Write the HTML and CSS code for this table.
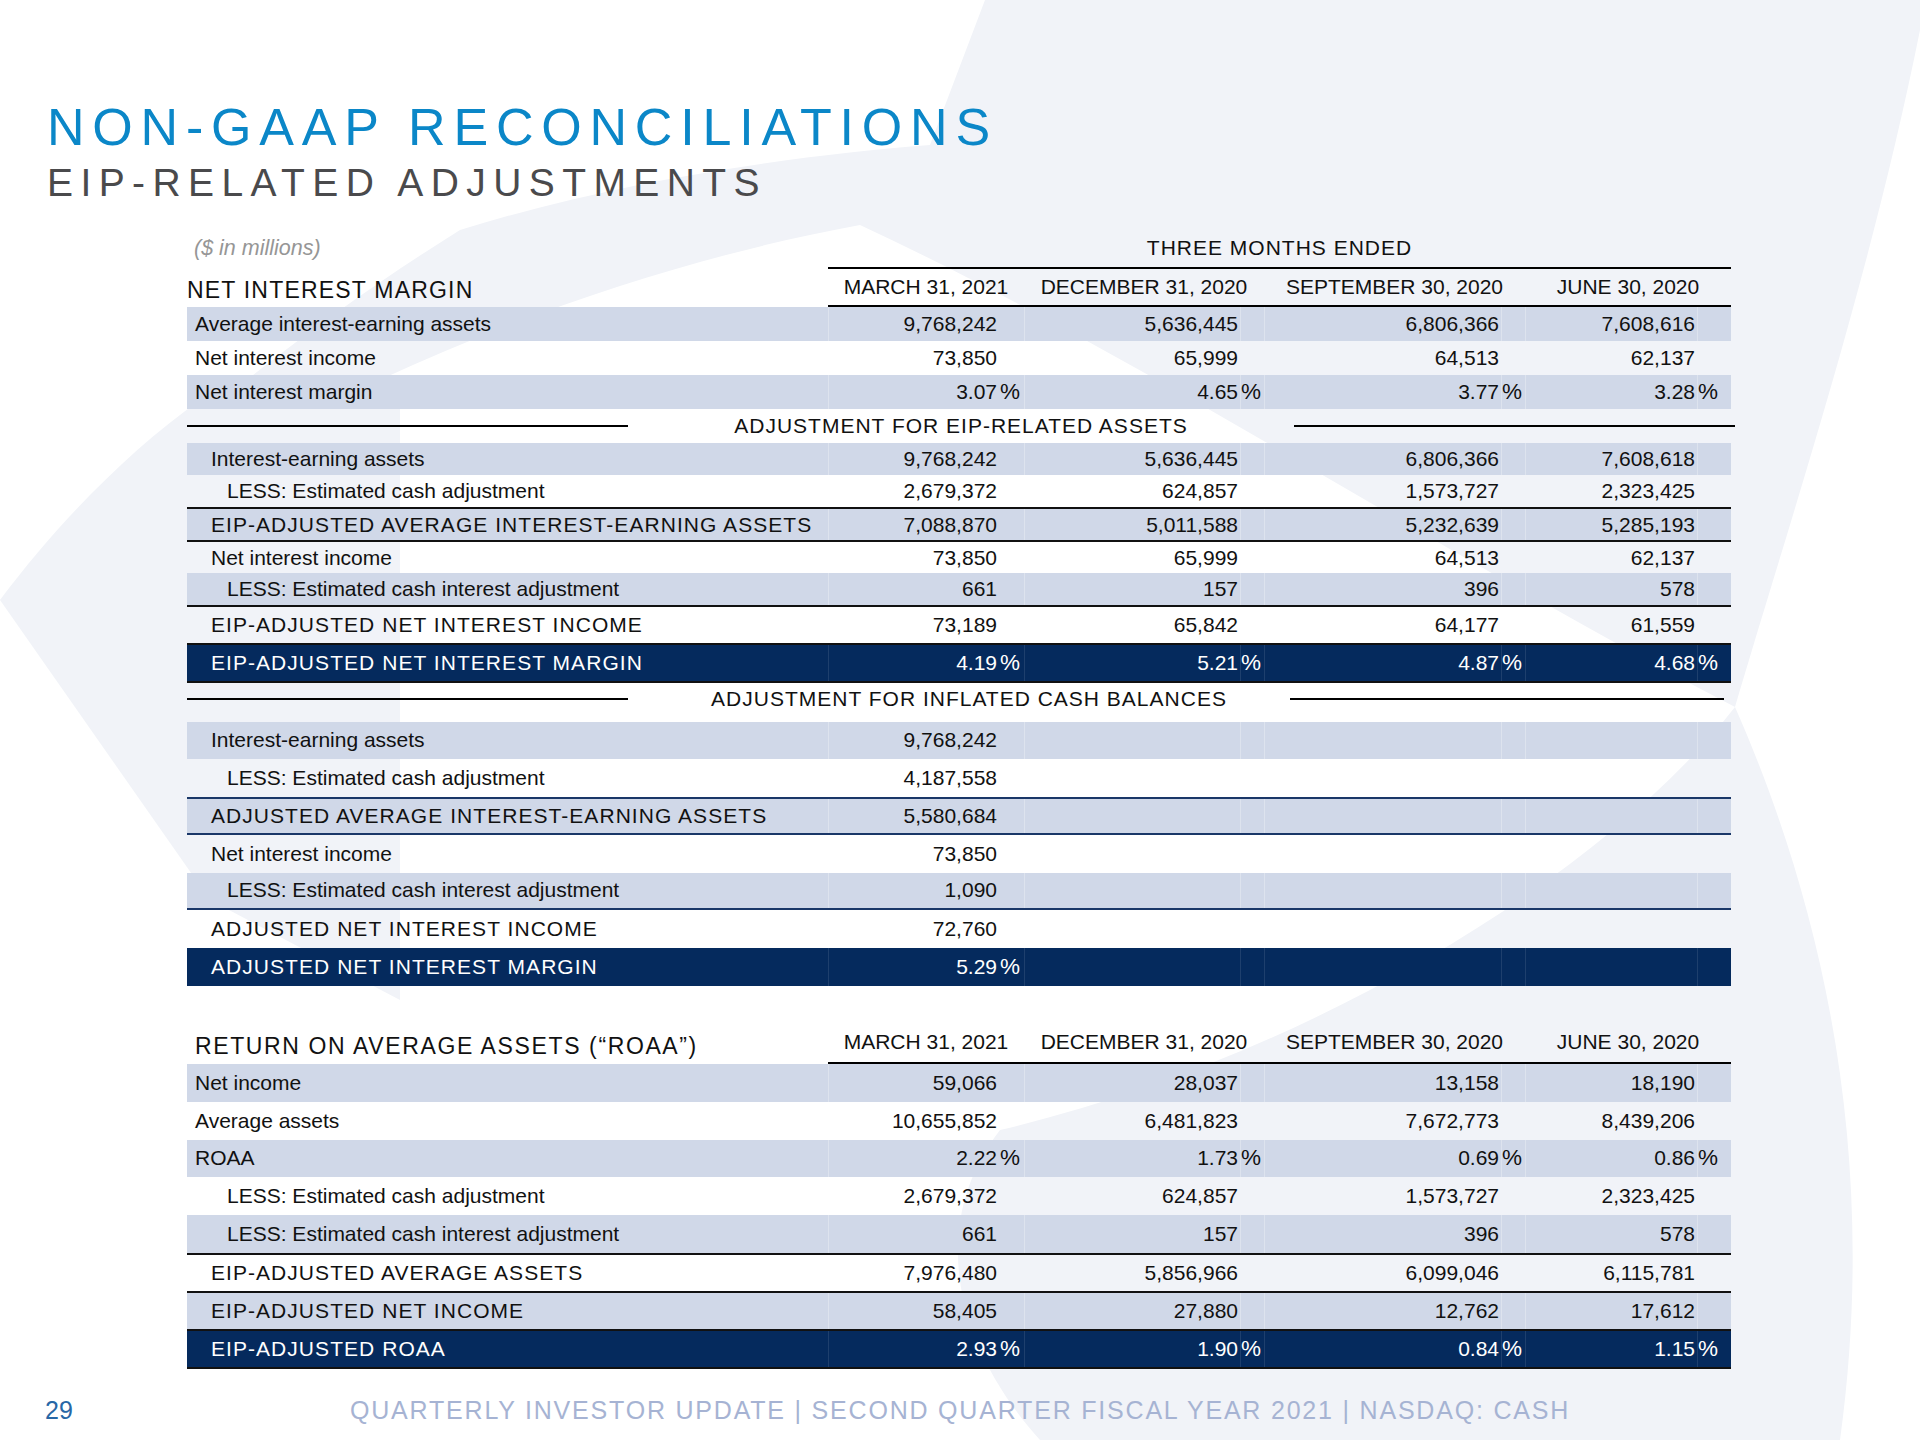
FILE: index.html
```html
<!DOCTYPE html>
<html lang="en">
<head>
<meta charset="utf-8">
<title>Non-GAAP Reconciliations</title>
<link rel="stylesheet" href="styles.css">
</head>
<body>
<div class="slide">
  <svg class="bg" viewBox="0 0 1920 1440" width="1920" height="1440" aria-hidden="true">
    <path d="M0 600 C150 450 300 330 460 230 C620 180 800 155 930 145 L985 0 L1920 0 L1920 30 C1870 280 1790 520 1735 707 C1450 560 1150 360 860 225 C560 280 250 420 0 600 Z"/>
    <path d="M0 600 C60 520 130 450 200 400 L400 380 L400 1000 L210 900 C140 800 70 700 0 600 Z"/>
    <path d="M1735 707 C1600 880 1300 1060 1000 1130 C930 1220 950 1340 1040 1440 L1840 1440 C1880 1150 1820 900 1735 707 Z"/>
  </svg>

  <div class="content">
    <header class="head">
      <h1 class="title">NON-GAAP RECONCILIATIONS</h1>
      <h2 class="subtitle">EIP-RELATED ADJUSTMENTS</h2>
    </header>

    <section class="tbl">
      <div class="row meta">
        <div class="note">($ in millions)</div>
        <div class="period">THREE MONTHS ENDED</div>
      </div>
      <div class="row colhead">
        <div class="hlbl">NET INTEREST MARGIN</div>
        <div class="ch">MARCH 31, 2021</div>
        <div class="ch">DECEMBER 31, 2020</div>
        <div class="ch">SEPTEMBER 30, 2020</div>
        <div class="ch">JUNE 30, 2020</div>
      </div>

      <div class="row r1 shade">
        <div class="lbl l0">Average interest-earning assets</div>
        <div class="n">9,768,242</div><div class="p"></div>
        <div class="n">5,636,445</div><div class="p"></div>
        <div class="n">6,806,366</div><div class="p"></div>
        <div class="n">7,608,616</div><div class="p"></div>
      </div>
      <div class="row r1">
        <div class="lbl l0">Net interest income</div>
        <div class="n">73,850</div><div class="p"></div>
        <div class="n">65,999</div><div class="p"></div>
        <div class="n">64,513</div><div class="p"></div>
        <div class="n">62,137</div><div class="p"></div>
      </div>
      <div class="row r1 shade">
        <div class="lbl l0">Net interest margin</div>
        <div class="n">3.07</div><div class="p">%</div>
        <div class="n">4.65</div><div class="p">%</div>
        <div class="n">3.77</div><div class="p">%</div>
        <div class="n">3.28</div><div class="p">%</div>
      </div>

      <div class="sect s2">
        <div class="rule"></div>
        <div class="stitle">ADJUSTMENT FOR EIP-RELATED ASSETS</div>
        <div class="rule"></div>
      </div>

      <div class="row r2 shade">
        <div class="lbl l1">Interest-earning assets</div>
        <div class="n">9,768,242</div><div class="p"></div>
        <div class="n">5,636,445</div><div class="p"></div>
        <div class="n">6,806,366</div><div class="p"></div>
        <div class="n">7,608,618</div><div class="p"></div>
      </div>
      <div class="row r2">
        <div class="lbl l2">LESS: Estimated cash adjustment</div>
        <div class="n">2,679,372</div><div class="p"></div>
        <div class="n">624,857</div><div class="p"></div>
        <div class="n">1,573,727</div><div class="p"></div>
        <div class="n">2,323,425</div><div class="p"></div>
      </div>
      <div class="row r2b shade bt">
        <div class="lbl l1 caps">EIP-ADJUSTED AVERAGE INTEREST-EARNING ASSETS</div>
        <div class="n">7,088,870</div><div class="p"></div>
        <div class="n">5,011,588</div><div class="p"></div>
        <div class="n">5,232,639</div><div class="p"></div>
        <div class="n">5,285,193</div><div class="p"></div>
      </div>
      <div class="row r2b bt">
        <div class="lbl l1">Net interest income</div>
        <div class="n">73,850</div><div class="p"></div>
        <div class="n">65,999</div><div class="p"></div>
        <div class="n">64,513</div><div class="p"></div>
        <div class="n">62,137</div><div class="p"></div>
      </div>
      <div class="row r2 shade">
        <div class="lbl l2">LESS: Estimated cash interest adjustment</div>
        <div class="n">661</div><div class="p"></div>
        <div class="n">157</div><div class="p"></div>
        <div class="n">396</div><div class="p"></div>
        <div class="n">578</div><div class="p"></div>
      </div>
      <div class="row r2c bt">
        <div class="lbl l1 caps">EIP-ADJUSTED NET INTEREST INCOME</div>
        <div class="n">73,189</div><div class="p"></div>
        <div class="n">65,842</div><div class="p"></div>
        <div class="n">64,177</div><div class="p"></div>
        <div class="n">61,559</div><div class="p"></div>
      </div>
      <div class="row r2c dark bt bb">
        <div class="lbl l1 caps">EIP-ADJUSTED NET INTEREST MARGIN</div>
        <div class="n">4.19</div><div class="p">%</div>
        <div class="n">5.21</div><div class="p">%</div>
        <div class="n">4.87</div><div class="p">%</div>
        <div class="n">4.68</div><div class="p">%</div>
      </div>

      <div class="sect s3">
        <div class="rule"></div>
        <div class="stitle">ADJUSTMENT FOR INFLATED CASH BALANCES</div>
        <div class="rule"></div>
      </div>

      <div class="row r3 shade">
        <div class="lbl l1">Interest-earning assets</div>
        <div class="n">9,768,242</div><div class="p"></div>
        <div class="n"></div><div class="p"></div>
        <div class="n"></div><div class="p"></div>
        <div class="n"></div><div class="p"></div>
      </div>
      <div class="row r3">
        <div class="lbl l2">LESS: Estimated cash adjustment</div>
        <div class="n">4,187,558</div><div class="p"></div>
        <div class="n"></div><div class="p"></div>
        <div class="n"></div><div class="p"></div>
        <div class="n"></div><div class="p"></div>
      </div>
      <div class="row r3 shade nt nb">
        <div class="lbl l1 caps">ADJUSTED AVERAGE INTEREST-EARNING ASSETS</div>
        <div class="n">5,580,684</div><div class="p"></div>
        <div class="n"></div><div class="p"></div>
        <div class="n"></div><div class="p"></div>
        <div class="n"></div><div class="p"></div>
      </div>
      <div class="row r3">
        <div class="lbl l1">Net interest income</div>
        <div class="n">73,850</div><div class="p"></div>
        <div class="n"></div><div class="p"></div>
        <div class="n"></div><div class="p"></div>
        <div class="n"></div><div class="p"></div>
      </div>
      <div class="row r3 shade nb">
        <div class="lbl l2">LESS: Estimated cash interest adjustment</div>
        <div class="n">1,090</div><div class="p"></div>
        <div class="n"></div><div class="p"></div>
        <div class="n"></div><div class="p"></div>
        <div class="n"></div><div class="p"></div>
      </div>
      <div class="row r3">
        <div class="lbl l1 caps">ADJUSTED NET INTEREST INCOME</div>
        <div class="n">72,760</div><div class="p"></div>
        <div class="n"></div><div class="p"></div>
        <div class="n"></div><div class="p"></div>
        <div class="n"></div><div class="p"></div>
      </div>
      <div class="row r3 dark">
        <div class="lbl l1 caps">ADJUSTED NET INTEREST MARGIN</div>
        <div class="n">5.29</div><div class="p">%</div>
        <div class="n"></div><div class="p"></div>
        <div class="n"></div><div class="p"></div>
        <div class="n"></div><div class="p"></div>
      </div>

      <div class="row colhead roaa-head">
        <div class="hlbl l0">RETURN ON AVERAGE ASSETS (“ROAA”)</div>
        <div class="ch">MARCH 31, 2021</div>
        <div class="ch">DECEMBER 31, 2020</div>
        <div class="ch">SEPTEMBER 30, 2020</div>
        <div class="ch">JUNE 30, 2020</div>
      </div>
      <div class="row r4 shade">
        <div class="lbl l0">Net income</div>
        <div class="n">59,066</div><div class="p"></div>
        <div class="n">28,037</div><div class="p"></div>
        <div class="n">13,158</div><div class="p"></div>
        <div class="n">18,190</div><div class="p"></div>
      </div>
      <div class="row r4">
        <div class="lbl l0">Average assets</div>
        <div class="n">10,655,852</div><div class="p"></div>
        <div class="n">6,481,823</div><div class="p"></div>
        <div class="n">7,672,773</div><div class="p"></div>
        <div class="n">8,439,206</div><div class="p"></div>
      </div>
      <div class="row r4 shade">
        <div class="lbl l0">ROAA</div>
        <div class="n">2.22</div><div class="p">%</div>
        <div class="n">1.73</div><div class="p">%</div>
        <div class="n">0.69</div><div class="p">%</div>
        <div class="n">0.86</div><div class="p">%</div>
      </div>
      <div class="row r4">
        <div class="lbl l2">LESS: Estimated cash adjustment</div>
        <div class="n">2,679,372</div><div class="p"></div>
        <div class="n">624,857</div><div class="p"></div>
        <div class="n">1,573,727</div><div class="p"></div>
        <div class="n">2,323,425</div><div class="p"></div>
      </div>
      <div class="row r4 shade">
        <div class="lbl l2">LESS: Estimated cash interest adjustment</div>
        <div class="n">661</div><div class="p"></div>
        <div class="n">157</div><div class="p"></div>
        <div class="n">396</div><div class="p"></div>
        <div class="n">578</div><div class="p"></div>
      </div>
      <div class="row r4 bt">
        <div class="lbl l1 caps">EIP-ADJUSTED AVERAGE ASSETS</div>
        <div class="n">7,976,480</div><div class="p"></div>
        <div class="n">5,856,966</div><div class="p"></div>
        <div class="n">6,099,046</div><div class="p"></div>
        <div class="n">6,115,781</div><div class="p"></div>
      </div>
      <div class="row r4 shade bt">
        <div class="lbl l1 caps">EIP-ADJUSTED NET INCOME</div>
        <div class="n">58,405</div><div class="p"></div>
        <div class="n">27,880</div><div class="p"></div>
        <div class="n">12,762</div><div class="p"></div>
        <div class="n">17,612</div><div class="p"></div>
      </div>
      <div class="row r4 dark bt bb">
        <div class="lbl l1 caps">EIP-ADJUSTED ROAA</div>
        <div class="n">2.93</div><div class="p">%</div>
        <div class="n">1.90</div><div class="p">%</div>
        <div class="n">0.84</div><div class="p">%</div>
        <div class="n">1.15</div><div class="p">%</div>
      </div>
    </section>

    <footer class="foot">
      <div class="pagenum">29</div>
      <div class="foottext">QUARTERLY INVESTOR UPDATE | SECOND QUARTER FISCAL YEAR 2021 | NASDAQ: CASH</div>
    </footer>
  </div>
</div>
</body>
</html>
```

FILE: styles.css
```css
* { box-sizing: border-box; }

html, body {
  margin: 0;
  padding: 0;
  background: #ffffff;
}

body {
  font-family: "Liberation Sans", Arial, Helvetica, sans-serif;
  color: #111111;
}

.slide {
  position: relative;
  width: 1920px;
  height: 1440px;
  overflow: hidden;
  background: #ffffff;
}

.bg {
  position: absolute;
  top: 0;
  left: 0;
  z-index: 0;
  fill: #f1f3f8;
}

.content {
  position: relative;
  z-index: 1;
  padding-top: 101px;
}

/* ---------- heading ---------- */
.head {
  padding-left: 47px;
}

.title {
  margin: 0;
  font-size: 52px;
  line-height: 52px;
  font-weight: 400;
  letter-spacing: 7.8px;
  color: #0b87c8;
  white-space: nowrap;
}

.subtitle {
  margin: 10px 0 0 0;
  font-size: 39px;
  line-height: 39px;
  font-weight: 400;
  letter-spacing: 7.4px;
  color: #4a4a4c;
  white-space: nowrap;
}

/* ---------- table ---------- */
.tbl {
  margin-left: 187px;
  margin-top: 26px;
  width: 1544px;
  font-size: 21px;
}

.row {
  display: grid;
  grid-template-columns: 641px 171px 25px 216px 24px 237px 24px 172px 34px;
  align-items: stretch;
}

.row > div {
  display: flex;
  align-items: center;
  white-space: nowrap;
}

.meta {
  height: 41px;
}

.note {
  padding-left: 7px;
  font-size: 21.5px;
  font-style: italic;
  color: #969696;
}

.period {
  grid-column: 2 / span 8;
  justify-content: center;
  letter-spacing: 1px;
  border-bottom: 2px solid #000;
}

.colhead {
  height: 38px;
}

.hlbl {
  font-size: 23px;
  letter-spacing: 1.2px;
  padding-top: 4px;
}

.ch {
  grid-column: span 2;
  justify-content: center;
  border-bottom: 2px solid #000;
}

.roaa-head {
  margin-top: 37px;
  height: 41px;
}

.roaa-head .hlbl {
  letter-spacing: 1.62px;
  padding-top: 6px;
}

.lbl {
  overflow: visible;
}

.l0 { padding-left: 8px; }
.l1 { padding-left: 24px; }
.l2 { padding-left: 40px; }

.caps {
  letter-spacing: 1.05px;
}

.n {
  justify-content: flex-end;
  padding-right: 2px;
}

.p {
  justify-content: flex-start;
  padding-left: 1px;
  font-size: 22.5px;
}

.r1 { height: 34px; }
.r2 { height: 32px; }
.r2b { height: 33px; }
.r2c { height: 38px; }
.r3 { height: 37.75px; }
.r4 { height: 37.9px; }

.shade {
  background: #d0d8e8;
}

.dark {
  background: #052a5d;
  color: #ffffff;
}

.shade > .n,
.shade > .p:not(:nth-child(3)) {
  box-shadow: inset 1px 0 0 rgba(255, 255, 255, 0.28);
}

.dark > .n,
.dark > .p:not(:nth-child(3)) {
  box-shadow: inset 1px 0 0 rgba(255, 255, 255, 0.1);
}

.bt { border-top: 2px solid #111; }
.bb { border-bottom: 2px solid #111; }
.r2c.dark.bb { height: 40px; }
.r4.dark.bb { height: 39.9px; }

.nt { border-top: 2px solid #1a3768; }
.nb { border-bottom: 2px solid #1a3768; }

/* ---------- section dividers ---------- */
.sect {
  display: grid;
  grid-template-columns: 441px 1fr 441px;
  align-items: center;
}

.s2 {
  height: 34px;
  margin-right: -4px;
}

.s3 {
  height: 38.5px;
  padding-bottom: 6px;
}

.s3 .rule:last-child {
  margin-right: 7px;
}

.s3 .stitle {
  padding-left: 20px;
}

.rule {
  height: 2px;
  background: #000;
}

.stitle {
  text-align: center;
  letter-spacing: 1px;
  white-space: nowrap;
}

/* ---------- footer ---------- */
.foot {
  display: flex;
  align-items: center;
  margin-top: 27px;
  padding-left: 45px;
  height: 30px;
}

.pagenum {
  width: 305px;
  font-size: 25px;
  color: #2767a6;
}

.foottext {
  font-size: 25px;
  letter-spacing: 1.8px;
  color: #a6b3d3;
  white-space: nowrap;
}
```
